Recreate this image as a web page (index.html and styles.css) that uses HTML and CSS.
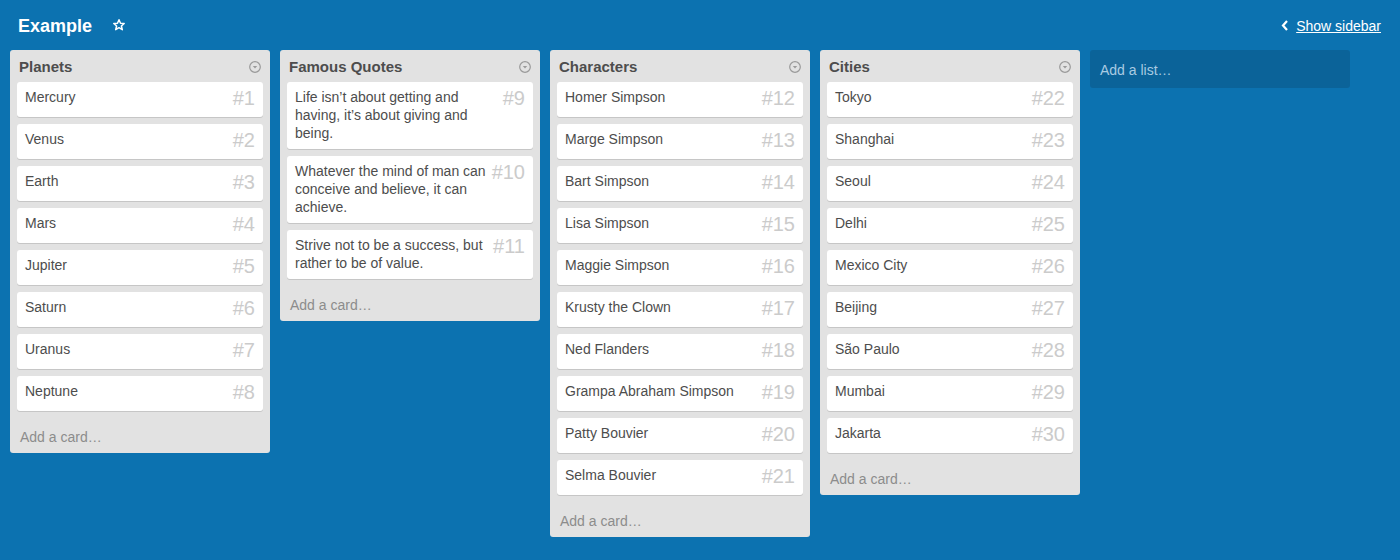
FILE: index.html
```html
<!DOCTYPE html>
<html lang="en">
<head>
<meta charset="utf-8">
<title>Example</title>
<link rel="stylesheet" href="styles.css">
</head>
<body>
<header class="topbar">
  <div class="board-title">
    <h1 class="board-name">Example</h1>
    <svg class="star" width="12" height="12" viewBox="0 0 12 12"><polygon points="6,0.8 7.5,4.2 11.2,4.5 8.4,7 9.3,10.7 6,8.7 2.7,10.7 3.6,7 0.8,4.5 4.5,4.2" fill="none" stroke="#fff" stroke-width="1.5" stroke-linejoin="round"/></svg>
  </div>
  <a class="sidebar-link" href="#"><svg class="chev" width="8" height="11" viewBox="0 0 8 11"><polyline points="6,1 2,5.5 6,10" fill="none" stroke="#fff" stroke-width="2.2"/></svg><span class="sidebar-text">Show sidebar</span></a>
</header>
<main class="board">
  <section class="list">
    <div class="list-header"><h2 class="list-name">Planets</h2><svg class="menu" width="12" height="12" viewBox="0 0 12 12"><circle cx="6" cy="6" r="5.3" fill="none" stroke="#9a9a9a" stroke-width="1.2"/><polygon points="3.8,5 8.2,5 6,7.6" fill="#9a9a9a"/></svg></div>
    <div class="card"><span class="num">#1</span>Mercury</div>
    <div class="card"><span class="num">#2</span>Venus</div>
    <div class="card"><span class="num">#3</span>Earth</div>
    <div class="card"><span class="num">#4</span>Mars</div>
    <div class="card"><span class="num">#5</span>Jupiter</div>
    <div class="card"><span class="num">#6</span>Saturn</div>
    <div class="card"><span class="num">#7</span>Uranus</div>
    <div class="card"><span class="num">#8</span>Neptune</div>
    <div class="add-card">Add a card…</div>
  </section>
  <section class="list">
    <div class="list-header"><h2 class="list-name">Famous Quotes</h2><svg class="menu" width="12" height="12" viewBox="0 0 12 12"><circle cx="6" cy="6" r="5.3" fill="none" stroke="#9a9a9a" stroke-width="1.2"/><polygon points="3.8,5 8.2,5 6,7.6" fill="#9a9a9a"/></svg></div>
    <div class="card"><span class="num">#9</span>Life isn’t about getting and having, it’s about giving and being.</div>
    <div class="card"><span class="num">#10</span>Whatever the mind of man can conceive and believe, it can achieve.</div>
    <div class="card"><span class="num">#11</span>Strive not to be a success, but rather to be of value.</div>
    <div class="add-card">Add a card…</div>
  </section>
  <section class="list">
    <div class="list-header"><h2 class="list-name">Characters</h2><svg class="menu" width="12" height="12" viewBox="0 0 12 12"><circle cx="6" cy="6" r="5.3" fill="none" stroke="#9a9a9a" stroke-width="1.2"/><polygon points="3.8,5 8.2,5 6,7.6" fill="#9a9a9a"/></svg></div>
    <div class="card"><span class="num">#12</span>Homer Simpson</div>
    <div class="card"><span class="num">#13</span>Marge Simpson</div>
    <div class="card"><span class="num">#14</span>Bart Simpson</div>
    <div class="card"><span class="num">#15</span>Lisa Simpson</div>
    <div class="card"><span class="num">#16</span>Maggie Simpson</div>
    <div class="card"><span class="num">#17</span>Krusty the Clown</div>
    <div class="card"><span class="num">#18</span>Ned Flanders</div>
    <div class="card"><span class="num">#19</span>Grampa Abraham Simpson</div>
    <div class="card"><span class="num">#20</span>Patty Bouvier</div>
    <div class="card"><span class="num">#21</span>Selma Bouvier</div>
    <div class="add-card">Add a card…</div>
  </section>
  <section class="list">
    <div class="list-header"><h2 class="list-name">Cities</h2><svg class="menu" width="12" height="12" viewBox="0 0 12 12"><circle cx="6" cy="6" r="5.3" fill="none" stroke="#9a9a9a" stroke-width="1.2"/><polygon points="3.8,5 8.2,5 6,7.6" fill="#9a9a9a"/></svg></div>
    <div class="card"><span class="num">#22</span>Tokyo</div>
    <div class="card"><span class="num">#23</span>Shanghai</div>
    <div class="card"><span class="num">#24</span>Seoul</div>
    <div class="card"><span class="num">#25</span>Delhi</div>
    <div class="card"><span class="num">#26</span>Mexico City</div>
    <div class="card"><span class="num">#27</span>Beijing</div>
    <div class="card"><span class="num">#28</span>São Paulo</div>
    <div class="card"><span class="num">#29</span>Mumbai</div>
    <div class="card"><span class="num">#30</span>Jakarta</div>
    <div class="add-card">Add a card…</div>
  </section>
  <div class="add-list">Add a list…</div>
</main>
</body>
</html>
```
FILE: styles.css
```css
html, body {
  margin: 0;
  padding: 0;
}
body {
  background: #0c72b0;
  font-family: "Liberation Sans", Arial, sans-serif;
  width: 1400px;
  height: 560px;
  overflow: hidden;
}
.topbar {
  height: 50px;
  display: flex;
  align-items: center;
  justify-content: space-between;
  padding: 0 19px 0 18px;
}
.board-title {
  display: flex;
  align-items: center;
  margin-top: 2px;
}
.board-name {
  margin: 0;
  font-size: 18px;
  font-weight: bold;
  color: #fff;
  line-height: 22px;
}
.star {
  margin-left: 21px;
  margin-top: -2px;
}
.sidebar-link {
  display: flex;
  align-items: center;
  color: #fff;
  text-decoration: none;
  font-size: 14px;
  line-height: 18px;
  margin-top: 1px;
}
.chev {
  margin-right: 7px;
}
.sidebar-text {
  text-decoration: underline;
}
.board {
  display: flex;
  align-items: flex-start;
  gap: 10px;
  padding-left: 10px;
}
.list {
  width: 260px;
  background: #e2e2e2;
  border-radius: 3px;
}
.list-header {
  height: 32px;
  display: flex;
  align-items: center;
  justify-content: space-between;
  padding: 0 9px 0 9px;
}
.list-name {
  margin: 0;
  font-size: 15px;
  font-weight: bold;
  color: #4d4d4d;
  line-height: 18px;
  margin-top: 1px;
}
.menu {
  margin-top: 1px;
}
.card {
  display: flow-root;
  background: #fff;
  border-radius: 3px;
  box-shadow: 0 1px 0 #c6c6c6;
  margin: 0 7px 7px;
  padding: 6px 8px 7px;
  font-size: 14px;
  line-height: 18px;
  color: #4d4d4d;
}
.num {
  float: right;
  font-size: 20px;
  line-height: 22px;
  color: #cbcbcb;
  margin: -1px 0 1px 4px;
}
.add-card {
  padding: 10px 10px 7px;
  font-size: 14px;
  line-height: 18px;
  color: #8c8c8c;
}
.add-list {
  width: 260px;
  box-sizing: border-box;
  padding: 11px 10px 9px;
  background: #0b6399;
  border-radius: 3px;
  font-size: 14px;
  line-height: 18px;
  color: #a9cbe2;
}
```
